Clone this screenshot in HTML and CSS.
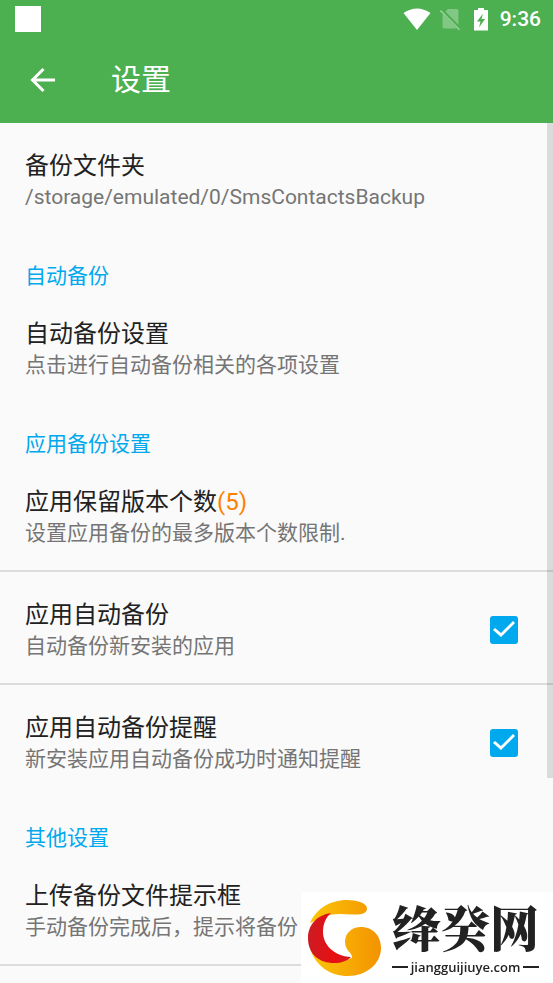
FILE: index.html
```html
<!DOCTYPE html>
<html lang="zh-CN">
<head>
<meta charset="utf-8">
<meta name="viewport" content="width=device-width, initial-scale=1">
<title>设置</title>
<link rel="stylesheet" href="styles.css">
</head>
<body>
<header class="header">
  <div class="status">
    <span class="notification"></span>
    <div class="indicators">
      <svg class="wifi" width="28" height="24" viewBox="0 0 28 24"><path d="M0.500 6Q14-3 27.500 6L14 23Z" fill="#fff"/></svg>
      <svg class="sim" width="20" height="24" viewBox="0 0 20 24"><path d="M8 2H17Q18.500 2 18.500 3.500V18L5.500 4.500ZM2.500 7L16.500 21.500H4Q2.500 21.500 2.500 20Z" fill="#fff" opacity=".3"/><path d="M.5 3.500L19.500 23" stroke="#fff" stroke-width="1.600" opacity=".4"/></svg>
      <svg class="battery" width="16" height="24" viewBox="0 0 16 24"><path fill-rule="evenodd" d="M5 1h6V3h4v20.500H1V3h4ZM10 6.500L4 14.500h3.500L6 20.500L12 12H8.500Z" fill="#fff"/></svg>
      <time class="clock">9:36</time>
    </div>
  </div>
  <div class="toolbar">
    <button class="back" type="button" aria-label="返回">
      <svg width="26" height="26" viewBox="0 0 26 26"><path d="M25 13H3M13.500 2L2.500 13L13.500 24" fill="none" stroke="#fff" stroke-width="3"/></svg>
    </button>
    <h1 class="page-title">设置</h1>
  </div>
</header>
<main class="settings">
  <section>
    <a class="item" href="#folder"><span class="text"><span class="name">备份文件夹</span><span class="summary">/storage/emulated/0/SmsContactsBackup</span></span></a>
  </section>
  <section>
    <h2 class="category">自动备份</h2>
    <a class="item" href="#auto"><span class="text"><span class="name">自动备份设置</span><span class="summary">点击进行自动备份相关的各项设置</span></span></a>
  </section>
  <section>
    <h2 class="category">应用备份设置</h2>
    <a class="item divided" href="#versions"><span class="text"><span class="name">应用保留版本个数<span class="count">(5)</span></span><span class="summary">设置应用备份的最多版本个数限制.</span></span></a>
    <label class="item divided" for="auto-backup"><span class="text"><span class="name">应用自动备份</span><span class="summary">自动备份新安装的应用</span></span><input class="check" id="auto-backup" type="checkbox" checked></label>
    <label class="item" for="auto-notify"><span class="text"><span class="name">应用自动备份提醒</span><span class="summary">新安装应用自动备份成功时通知提醒</span></span><input class="check" id="auto-notify" type="checkbox" checked></label>
  </section>
  <section>
    <h2 class="category">其他设置</h2>
    <a class="item divided" href="#upload"><span class="text"><span class="name">上传备份文件提示框</span><span class="summary">手动备份完成后，提示将备份</span></span></a>
  </section>
  <div class="scroll-thumb"></div>
</main>
<aside class="brand">
  <svg class="brand-mark" width="76" height="78" viewBox="0 0 76 78">
    <defs>
      <linearGradient id="gold" x1="0" x2="1"><stop offset="0" stop-color="#fcc608"/><stop offset="1" stop-color="#f39200"/></linearGradient>
      <linearGradient id="red" x1="0" x2="1"><stop offset="0" stop-color="#cb1c24"/><stop offset=".6" stop-color="#e80f12"/><stop offset="1" stop-color="#d21b20"/></linearGradient>
    </defs>
    <path d="M4 24C10 10 24 1 41 1C53 1 61 5 61 9.500C61 15 54 16 46 15.500C36 15 26 14 18 18ZM4 50C12 62 28 66 46 59C47 54 39 52 39 43C39 34 46 28 55 28C67 28 75 37 75 49C75 65 60 77 42 77C24 77 10 67 4 50Z" fill="url(#gold)"/>
    <path d="M25 14C11 16 2 26 2 39C2 56 14 64 28 64C35 64 41 62 45 58C28 57 17 46 17 33C17 25 20 18 25 14Z" fill="url(#red)"/>
  </svg>
  <div class="brand-text">
    <strong class="brand-name">绛癸网</strong>
    <span class="domain">jiangguijiuye.com</span>
  </div>
</aside>
</body>
</html>
```
FILE: styles.css
```css
* {
  box-sizing: border-box;
}

body {
  margin: 0;
  height: 100vh;
  overflow: hidden;
  background: #fafafa;
  color: #212121;
  font-family: Roboto, "Noto Sans CJK SC", sans-serif;
}

.header {
  background: #4caf50;
  color: #fff;
}

.status {
  display: flex;
  justify-content: space-between;
  align-items: center;
  height: 37px;
  padding: 0 12px 0 15px;
}

.notification {
  width: 26px;
  height: 26px;
  background: #fff;
}

.indicators {
  display: flex;
  align-items: center;
  gap: 9px;
}

.battery {
  margin-left: 4px;
}

.clock {
  padding-left: 2px;
  font-size: 21px;
  line-height: 26px;
  font-weight: 500;
}

.toolbar {
  display: flex;
  align-items: center;
  height: 86px;
  padding: 0 30px;
  gap: 55px;
}

.back {
  display: flex;
  padding: 0;
  border: 0;
  background: none;
}

.page-title {
  margin: 0;
  font-size: 30px;
  line-height: 40px;
  font-weight: 400;
}

.settings {
  position: relative;
}

.category {
  margin: 0;
  padding: 27px 25px 0;
  color: #00a8ee;
  font-size: 21px;
  line-height: 30px;
  font-weight: 400;
}

.item {
  display: flex;
  align-items: center;
  justify-content: space-between;
  padding: 27px 35px 22px 25px;
  color: inherit;
  text-decoration: none;
}

.divided {
  border-bottom: 2px solid #dcdcdc;
}

.text {
  display: flex;
  flex-direction: column;
}

.name {
  font-size: 24px;
  line-height: 32px;
}

.count {
  color: #ff8000;
}

.summary {
  color: #757575;
  font-size: 21px;
  line-height: 30px;
}

.check {
  appearance: none;
  flex: none;
  width: 28px;
  height: 28px;
  margin: 0;
  border: 2px solid #757575;
  border-radius: 3px;
}

.check:checked {
  border: 0;
  background: #00a8ee;
}

.check:checked::before {
  content: "";
  display: block;
  width: 28px;
  height: 28px;
  background: #fff;
  clip-path: polygon(3px 14px, 5px 12px, 11px 17px, 23px 5px, 25px 7px, 11px 21px);
}

.scroll-thumb {
  position: absolute;
  top: 0;
  right: 0;
  width: 6px;
  height: 655px;
  background: rgba(0, 0, 0, 0.12);
}

.brand {
  position: fixed;
  right: 0;
  bottom: 0;
  display: flex;
  align-items: center;
  gap: 10px;
  padding: 7px 14px 6px 5px;
  background: #fff;
  color: #222;
}

.brand-text {
  display: flex;
  flex-direction: column;
}

.brand-name {
  font-family: "Noto Serif CJK SC", "Noto Sans CJK SC", serif;
  font-size: 49px;
  line-height: 54px;
  font-weight: 900;
}

.domain {
  display: flex;
  align-items: center;
  gap: 3px;
  padding-top: 4px;
  font-family: "Open Sans", sans-serif;
  font-size: 13px;
  line-height: 20px;
  font-weight: 600;
}

.domain::before,
.domain::after {
  content: "";
  flex: 1;
  height: 2px;
  background: #222;
}
```
